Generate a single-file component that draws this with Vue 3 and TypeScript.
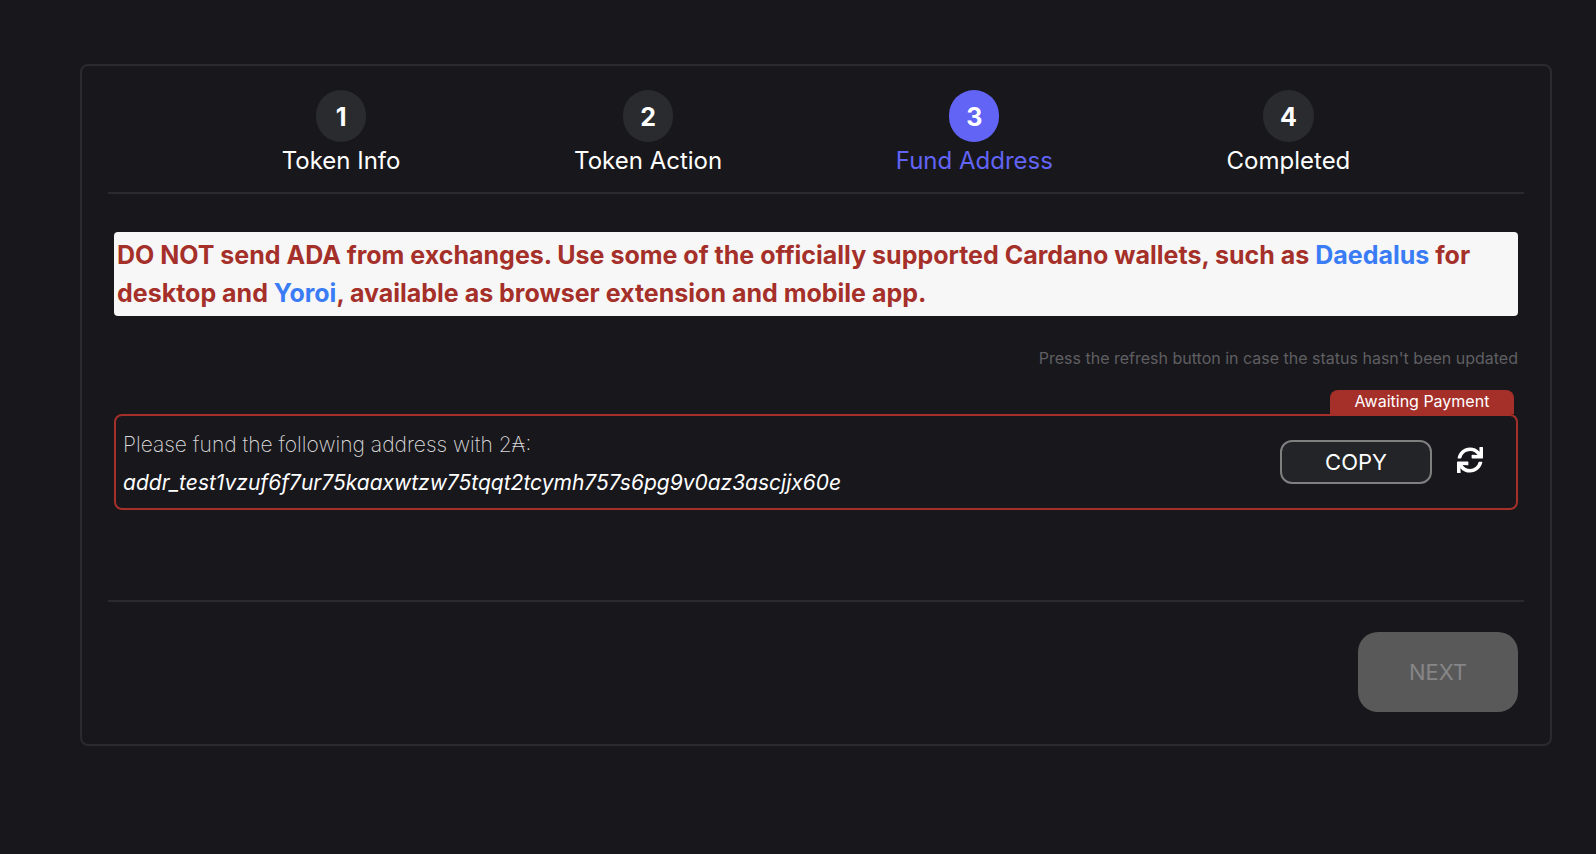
<script setup lang="ts">
interface Step {
  id: number
  label: string
}

const steps: Step[] = [
  { id: 1, label: 'Token Info' },
  { id: 2, label: 'Token Action' },
  { id: 3, label: 'Fund Address' },
  { id: 4, label: 'Completed' },
]
const currentStep = 3
const address = 'addr_test1vzuf6f7ur75kaaxwtzw75tqqt2tcymh757s6pg9v0az3ascjjx60e'

function copyAddress(): void {
  navigator.clipboard?.writeText(address)
}
</script>

<template>
  <main class="page">
    <section class="card">
      <ol class="steps">
        <li
          v-for="step in steps"
          :key="step.id"
          class="step"
          :class="{ active: step.id === currentStep }"
          :aria-current="step.id === currentStep ? 'step' : undefined"
        >
          <span class="number">{{ step.id }}</span>
          <span class="label">{{ step.label }}</span>
        </li>
      </ol>

      <div class="content">
        <p class="warning">
          DO NOT send ADA from exchanges. Use some of the officially supported Cardano wallets, such as
          <a href="#daedalus">Daedalus</a> for desktop and <a href="#yoroi">Yoroi</a>, available as browser
          extension and mobile app.
        </p>
        <p class="hint">Press the refresh button in case the status hasn't been updated</p>
        <div class="status">Awaiting Payment</div>
        <div class="payment">
          <div class="details">
            <p class="prompt">Please fund the following address with 2₳:</p>
            <p class="address">{{ address }}</p>
          </div>
          <button class="copy" type="button" @click="copyAddress">COPY</button>
          <button class="refresh" type="button" aria-label="Refresh">
            <svg viewBox="0 0 512 512" aria-hidden="true">
              <path
                fill="currentColor"
                d="M440.65 12.57l4 82.77A247.16 247.16 0 0 0 255.83 8C134.73 8 33.91 94.92 12.29 209.82A12 12 0 0 0 24.09 224h49.05a12 12 0 0 0 11.67-9.26 175.91 175.91 0 0 1 317-56.94l-101.46-4.86a12 12 0 0 0-12.57 12v47.41a12 12 0 0 0 12 12H500a12 12 0 0 0 12-12V12a12 12 0 0 0-12-12h-47.37a12 12 0 0 0-11.98 12.57zM255.83 432a175.61 175.61 0 0 1-146-77.8l101.8 4.87a12 12 0 0 0 12.57-12v-47.4a12 12 0 0 0-12-12H12a12 12 0 0 0-12 12V500a12 12 0 0 0 12 12h47.35a12 12 0 0 0 12-12.6l-4.15-82.57A247.17 247.17 0 0 0 255.83 504c121.11 0 221.93-86.92 243.55-201.82a12 12 0 0 0-11.8-14.18h-49.05a12 12 0 0 0-11.67 9.26A175.86 175.86 0 0 1 255.83 432z"
              />
            </svg>
          </button>
        </div>
      </div>

      <footer class="footer">
        <button class="next" type="button" disabled>NEXT</button>
      </footer>
    </section>
  </main>
</template>

<style>
body {
  margin: 0;
  background: #18171c;
}
</style>

<style scoped>
.page {
  padding: 64px 44px 64px 80px;
  color: #fff;
  font-family: Inter, "Noto Sans", sans-serif;
  font-size: 25px;
  line-height: 38px;
}

.card {
  padding: 24px 26px 32px;
  border: 2px solid #2b2b2f;
  border-radius: 8px;
}

.steps {
  display: flex;
  justify-content: space-evenly;
  margin: 0;
  padding: 0 0 12px;
  border-bottom: 2px solid #2b2b2f;
  list-style: none;
}

.step {
  display: flex;
  flex-direction: column;
  align-items: center;
}

.number {
  box-sizing: border-box;
  min-width: 50px;
  padding: 2px 17px 0;
  border-radius: 26px;
  background: #2a2b2f;
  font-weight: 700;
  line-height: 50px;
  text-align: center;
}

.label {
  font-size: 24px;
}

.active {
  color: #6264f6;
}

.active .number {
  background: #6264f6;
  color: #fff;
}

.content {
  padding: 38px 6px 90px;
}

.warning {
  margin: 0;
  padding: 4px 3px;
  border-radius: 4px;
  background: #f7f7f7;
  color: #a5302a;
  font-weight: 700;
}

.warning a {
  color: #3a7cf6;
  text-decoration: none;
}

.hint {
  margin: 24px 0 14px;
  color: #5f5f62;
  font-size: 16px;
  line-height: 36px;
  text-align: right;
}

.status {
  box-sizing: border-box;
  width: 184px;
  margin: 0 4px 0 auto;
  padding-bottom: 2px;
  border-radius: 8px 8px 0 0;
  background: #a5302a;
  font-size: 16px;
  line-height: 22px;
  text-align: center;
}

.payment {
  display: flex;
  align-items: center;
  border: 2px solid #a5302a;
  border-radius: 8px;
}

.details {
  flex: 1;
  padding: 10px 7px 6px;
  font-size: 21px;
}

.prompt,
.address {
  margin: 0;
}

.prompt {
  color: #d8d8d8;
  font-weight: 200;
}

.address {
  font-style: italic;
}

.copy {
  box-sizing: border-box;
  width: 152px;
  height: 44px;
  padding: 0;
  border: 2px solid #7f7f7f;
  border-radius: 12px;
  background: #222427;
  color: #fff;
  font: inherit;
  font-size: 22px;
  line-height: 40px;
}

.refresh {
  display: flex;
  margin: 0 33px 4px 25px;
  padding: 0;
  border: 0;
  background: none;
  color: #fff;
}

.refresh svg {
  width: 26px;
  height: 26px;
}

.footer {
  display: flex;
  justify-content: flex-end;
  padding: 30px 6px 0;
  border-top: 2px solid #2b2b2f;
}

.next {
  width: 160px;
  height: 80px;
  padding: 0;
  border: 0;
  border-radius: 20px;
  background: #59595a;
  color: #868688;
  font: inherit;
  font-size: 22px;
}
</style>
